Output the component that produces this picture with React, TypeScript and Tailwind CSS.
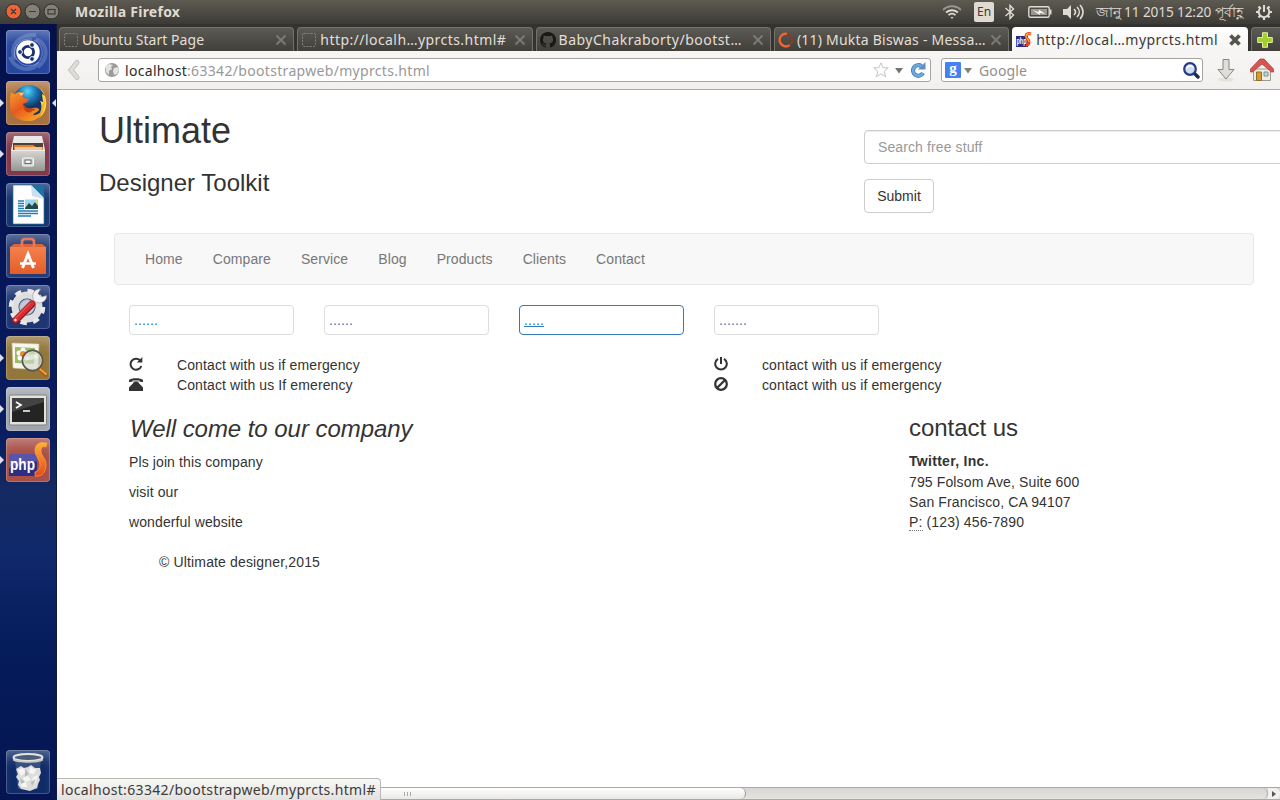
import type { ReactNode } from "react";

const ui = "font-['Noto_Sans','Open_Sans',sans-serif]";

function Tile({ bg, children, running, active }: { bg: string; children: ReactNode; running?: boolean; active?: boolean }) {
  return (
    <div className="relative flex h-11 w-full shrink-0 justify-center">
      {running && (
        <svg className="absolute left-0 top-[18px] h-2 w-1" viewBox="0 0 4 8"><path d="M0 0 4 4 0 8Z" fill="#dde0ec" /></svg>
      )}
      <div className={"h-11 w-11 overflow-hidden rounded-[4px] shadow-[inset_0_0_0_1px_rgba(255,255,255,0.2),inset_0_12px_12px_-6px_rgba(255,255,255,0.3)] " + bg}>
        <svg className="h-11 w-11" viewBox="0 0 44 44">{children}</svg>
      </div>
      {active && (
        <svg className="absolute right-0 top-[18px] h-2 w-1" viewBox="0 0 4 8"><path d="M4 0 0 4 4 8Z" fill="#dde0ec" /></svg>
      )}
    </div>
  );
}

function Launcher() {
  return (
    <aside className="flex w-[57px] shrink-0 flex-col gap-[7px] border-r border-[#111a3c] bg-[linear-gradient(180deg,#03104a_0%,#06175a_35%,#0a1f60_54%,#152a62_60%,#10296a_68%,#082060_76%,#051a59_84%,#051552_100%)] pt-1.5 pb-1.5">
      <Tile bg="bg-[#2747a0]">
        <g fill="none" stroke="#c8d4f4" strokeWidth="4" opacity="0.25">
          <path d="M9 30C3 16 13 4 30 5" /><path d="M30 9C42 14 43 28 32 37" /><path d="M33 33C25 43 9 40 4 27" />
        </g>
        <g fill="none" stroke="#dbe3f8" strokeWidth="1" opacity="0.45">
          <path d="M9 28C6 16 15 8 26 9" /><path d="M28 10c9 4 11 15 4 23" /><path d="M33 32c-8 7-19 4-23-4" />
        </g>
        <circle cx="22" cy="22" r="11.7" fill="#fff" />
        <circle cx="22" cy="22" r="5.6" fill="none" stroke="#18316f" strokeWidth="2.8" />
        <g fill="#18316f" stroke="#fff" strokeWidth="1"><circle cx="14" cy="22" r="2.4" /><circle cx="26" cy="15" r="2.4" /><circle cx="26" cy="29" r="2.4" /></g>
      </Tile>
      <Tile bg="bg-[#a9713f]" running active>
        <defs>
          <radialGradient id="globe" cx="0.45" cy="0.2"><stop stopColor="#62d3f3" /><stop offset="0.5" stopColor="#1b80bf" /><stop offset="1" stopColor="#153566" /></radialGradient>
          <linearGradient id="fox" x2="0.8" y2="1"><stop stopColor="#f69a30" /><stop offset="0.5" stopColor="#e85a1c" /><stop offset="1" stopColor="#f7a62b" /></linearGradient>
        </defs>
        <circle cx="23" cy="20" r="16" fill="url(#globe)" />
        <path d="M34 7c9 9 8 24-1 30 5-6 4-12 1-17l3 1-1-8 3 2Z" fill="#ffe34e" />
        <path d="M38 15c4 15-5 25-17 25 11-2 16-9 14-18l2 1Z" fill="#fbb92d" />
        <path d="M5 11c1 2 3 2 4 2 3-3 6-2 9-1-2 2-2 4 0 5l5 1c0 3-4 4-6 5 1 4 6 6 10 4 4-1 7 1 6 2-1 2-4 2-6 5 4 0 8-2 10-5-2 8-9 11-15 11C10 40 4 33 4 24c0-5 0-9 1-13Z" fill="url(#fox)" />
        <path d="M18 24c3 5 8 3 11 4 1 1-2 1-4 3-3 2-9-2-7-7Z" fill="#c9420e" />
        <path d="M13 12l5 0-3 3Z" fill="#ffd080" />
      </Tile>
      <Tile bg="bg-[#823848]" running>
        <defs><linearGradient id="cab" y2="1" x2="0"><stop stopColor="#d6d6d2" /><stop offset="1" stopColor="#969693" /></linearGradient></defs>
        <path d="M8 4h28l3 14H5Z" fill="#e9e9e7" /><path d="M7 11h30v8H7Z" fill="#4e4137" />
        <path d="M8 13h19l3 2h7v4H8Z" fill="#e68332" /><path d="M9 15h27v4H9Z" fill="#f3c49b" />
        <rect x="5" y="18" width="34" height="21" rx="1.5" fill="url(#cab)" /><path d="M5 18.5h34" stroke="#eee" />
        <rect x="16.5" y="26" width="11" height="8" rx="1" fill="#d3d3d3" stroke="#f4f4f4" /><rect x="19" y="28" width="6" height="3.5" fill="#f5f5f5" stroke="#686868" />
      </Tile>
      <Tile bg="bg-[#15336f]">
        <path d="M7 2h21l10 10v29H7Z" fill="#fff" /><path d="M25 2h13v13Z" fill="#1b71a6" /><path d="M25 2l1 11 12 3Z" fill="#c5e1ef" />
        <path d="M12 18h6M12 20.5h6M12 23h6M12 25.5h6M12 28h20M12 30.5h20M12 33h13" stroke="#1e80b9" strokeWidth="1.4" />
        <rect x="19" y="16.5" width="13" height="9.5" fill="#9bd4f2" /><path d="M19 25l4-5 3 3 3-4 3 4v3H19Z" fill="#254a43" /><circle cx="30" cy="18.500" r="1.3" fill="#f4d440" />
        <path d="M7 2h21l10 10v29H7Z" fill="none" stroke="#2678a2" strokeWidth="0.7" />
      </Tile>
      <Tile bg="bg-[#243d74]">
        <defs><linearGradient id="bag" y2="1" x2="0"><stop stopColor="#f5814d" /><stop offset="1" stopColor="#e35d28" /></linearGradient></defs>
        <path d="M4 13h36v27H4Z" fill="url(#bag)" /><path d="M4 13l4-3h28l4 3Z" fill="#d9643a" />
        <path d="M16 14V8c0-2 1-3 3-3h6c2 0 3 1 3 3v6" fill="none" stroke="#e87857" strokeWidth="2.6" />
        <path d="M16.5 34 22 20l5.500 14" fill="none" stroke="#fff" strokeWidth="3" /><path d="M14 29.500h16" stroke="#fff" strokeWidth="2.5" />
      </Tile>
      <Tile bg="bg-[#1d3673]">
        <circle cx="21" cy="22" r="12" fill="none" stroke="#dedede" strokeWidth="7" />
        <circle cx="21" cy="22" r="16" fill="none" stroke="#e8e8e8" strokeWidth="4.5" strokeDasharray="6.3 6.27" />
        <circle cx="21" cy="22" r="7.5" fill="#c3c9d6" stroke="#9ba2b1" />
        <path d="m22 22 9-9" stroke="#d8d8d8" strokeWidth="4.5" />
        <path d="M27.500 15C25 9 29 3.500 34.500 4L32 8.500l3.500 3.500 5-1.500C41 16 35 19.500 29.500 17Z" fill="#f0f0f0" stroke="#999" strokeWidth="0.6" />
        <path d="M9.500 35.500 26 19" stroke="#8e1318" strokeWidth="7" strokeLinecap="round" /><path d="M9.500 35 26 18.500" stroke="#d92e31" strokeWidth="5.300" strokeLinecap="round" />
        <path d="M9 33.500 24.500 18" stroke="#ef6a68" strokeWidth="1" />
        <circle cx="9.500" cy="35" r="1.2" fill="#fff" />
      </Tile>
      <Tile bg="bg-[#92763a]" running>
        <path d="M6 7l27 1-1 26-25-2Z" fill="#f7f7f0" stroke="#c9c2a1" strokeWidth="0.6" /><path d="M9 11l20 1-1 16-19-1Z" fill="#9bbb66" />
        <g fill="#fff"><circle cx="17" cy="14" r="2.5" /><circle cx="13" cy="17" r="2.5" /><circle cx="21" cy="17" r="2.5" /><circle cx="14" cy="22" r="2.5" /><circle cx="20" cy="22" r="2.5" /></g><circle cx="17" cy="18" r="3" fill="#ed8832" />
        <path d="m34 33 6 6" stroke="#a85f15" strokeWidth="4.5" strokeLinecap="round" /><path d="m34 33 6 5" stroke="#eaa13a" strokeWidth="2" strokeLinecap="round" />
        <circle cx="26.500" cy="24.500" r="10" fill="#d5dacb" fillOpacity="0.65" stroke="#55574c" strokeWidth="1.8" /><circle cx="26.500" cy="24.500" r="8.8" fill="none" stroke="#ddd" strokeWidth="0.8" />
        <path d="M20 23c3-7 11-5 13-1-5 0-8 4-13 1Z" fill="#fff" opacity="0.5" />
      </Tile>
      <Tile bg="bg-[#9fa4ae]" running>
        <rect x="3.500" y="8" width="37" height="30" rx="1.500" fill="#e2e2dd" stroke="#81847f" /><rect x="6" y="11" width="32" height="24" fill="#242424" />
        <path d="M6 11h32v4L6 25Z" fill="#555" opacity="0.65" /><path d="m10 15 5 3-5 3M17 24h7" fill="none" stroke="#fff" strokeWidth="1.7" />
      </Tile>
      <Tile bg="bg-[#a84f47]" running>
        <defs><linearGradient id="phps" y2="1" x2="0"><stop stopColor="#ffb238" /><stop offset="1" stopColor="#e64915" /></linearGradient></defs>
        <rect x="3" y="16" width="28" height="22" fill="#2b2e83" /><path d="M3 16h28v7L3 30Z" fill="#5855a8" />
        <text x="4" y="32" fill="#fff" fontFamily="Liberation Sans, sans-serif" fontSize="17" fontWeight="bold" textLength="25" lengthAdjust="spacingAndGlyphs">php</text>
        <path d="M41 5c-7-2-12 1-12 7 0 7 5 9 5 15 0 4-2 6-5 7v4c7 1 11-4 11-11 0-7-5-9-5-14 0-4 2-5 5-4Z" fill="url(#phps)" stroke="#ffa444" strokeWidth="0.7" />
      </Tile>
      <div className="flex-1" />
      <Tile bg="bg-[#102c68]">
        <path d="M9 10h26l-3 29H12Z" fill="#5c7095" opacity="0.5" />
        <path d="M10 19l5-3 3 2 4-1 3-2 4 3 5 0 1 5-2 4 1 3-2 4-1 4-7 3-9-2-3-4 1-4-3-4 2-3Z" fill="#ddd" />
        <g fill="#f5f5f2"><path d="m12 20 5-2 3 4-5 4ZM24 17l6 3-2 4-5-1ZM17 28l4-3 4 5-6 2ZM27 27l5-2-2 7-4 1ZM14 33l6-1 1 5-5 0Z" /></g>
        <g fill="#b8bab7"><path d="m19 19 4 5-4 3ZM14 28l5 4-4 2ZM25 32l5-3-4 7Z" /></g>
        <ellipse cx="22" cy="7.500" rx="14.500" ry="3.500" fill="#4a5d7b" stroke="#e4e4df" strokeWidth="2" /><path d="M7 8c2 4 28 4 30 0v2.500c-4 3-26 3-30 0Z" fill="#cacac5" />
      </Tile>
    </aside>
  );
}

function TopBar() {
  return (
    <header className={"flex h-6 shrink-0 items-center bg-linear-to-b from-[#5d5a51] to-[#3c3b37] text-[14px] text-[#dfdbd2] " + ui}>
      <svg className="ml-[5px] h-5 w-14" viewBox="0 0 56 20">
        <g stroke="#302f2b"><circle cx="8.500" cy="9.500" r="7.500" fill="#ee6435" /><circle cx="27.500" cy="9.500" r="7.500" fill="#838078" /><circle cx="46.500" cy="9.500" r="7.500" fill="#838078" /></g>
        <g stroke="#3a3934" strokeWidth="1.2" fill="none"><path d="m6 7 5 5m0-5-5 5M24 9.500h7" /><rect x="43" y="7.500" width="7" height="4.500" /></g>
      </svg>
      <span className="ml-[14px] w-[120px] whitespace-nowrap text-[14px] font-bold leading-6 tracking-[0.25px]">Mozilla Firefox</span>
      <div className="flex-1" />
      <div className="flex h-6 items-center">
        <svg className="h-6 w-[22px]" viewBox="0 0 22 24" fill="none" stroke="#dfdbd2" strokeWidth="1.8">
          <path d="M2 10c5-5 13-5 18 0" opacity="0.5" /><path d="M5 12.500c4-3 8-3 12 0M7.500 15.200c2-2 5-2 7 0" /><path d="m9.500 17 1.500 2 1.500-2Z" fill="#dfdbd2" stroke="none" />
        </svg>
        <span className="ml-[11px] flex h-5 w-5 items-center justify-center rounded-[2px] bg-[#dfdbd2] text-[12px] text-[#3c3b37]">En</span>
        <svg className="ml-[10px] h-5 w-3" viewBox="0 0 12 20" fill="none" stroke="#dfdbd2" strokeWidth="1.4"><path d="m1.500 6 8 7L6 16.500v-13L9.500 7l-8 7" /></svg>
        <svg className="ml-[12px] h-5 w-6" viewBox="0 0 24 20"><rect x="0.800" y="4.700" width="20.400" height="10.600" rx="1.500" fill="none" stroke="#dfdbd2" strokeWidth="1.400" /><path d="M3 7h16v6H3Z" fill="#99968f" /><path d="M22 7.500h1.500v5H22Z" fill="#dfdbd2" /><path d="M4.500 8 11 10.200 10.500 7.500 17.500 12 11.500 10.800 12 13Z" fill="#fff" /></svg>
        <svg className="ml-[11px] h-5 w-[22px]" viewBox="0 0 22 20" fill="none" stroke="#dfdbd2" strokeWidth="1.6"><path d="M0 7h4l4-4v14l-4-4H0Z" fill="#dfdbd2" stroke="none" /><path d="M11 7c2 2 2 4 0 6M14 5c3 3 3 7 0 10M17 3c4 4 4 10 0 14" /></svg>
        <span className="ml-[11px] w-[149px] whitespace-nowrap text-[13.700px] leading-6 tracking-[-0.150px]">জানু 11 2015 12:20 পূর্বাহ্ণ</span>
        <svg className="mr-[7px] ml-[10px] h-5 w-[18px]" viewBox="0 0 18 20" fill="none" stroke="#dfdbd2">
          <path d="M6 5.500a5.300 5.300 0 1 0 6 0" strokeWidth="2" /><path d="M9 3v7" strokeWidth="2" /><path d="M3.500 4.500l2 2M14.500 4.500l-2 2M1 10h2.500M14.500 10H17M3.500 15.500l2-2M14.500 15.500l-2-2M9 15v3" strokeWidth="2.2" />
        </svg>
      </div>
    </header>
  );
}

function CloseX({ dark }: { dark?: boolean }) {
  return <svg className="h-3 w-3 shrink-0" viewBox="0 0 12 12"><path d="m1.500 1.500 9 9m0-9-9 9" stroke={dark ? "#555550" : "#7c7a73"} strokeWidth={dark ? 3.8 : 2} /></svg>;
}

function BlankIcon() {
  return <svg className="h-4 w-4 shrink-0" viewBox="0 0 16 16"><rect x="1.500" y="1.500" width="13" height="13" rx="1.500" fill="none" stroke="#85837c" strokeDasharray="2 1.3" /></svg>;
}

function Tab({ icon, title, spacing }: { icon: ReactNode; title: string; spacing: string }) {
  return (
    <div className="flex h-6 w-[235.300px] shrink-0 items-center rounded-t-[4px] border border-b-0 border-[#74726b] bg-linear-to-b from-[#5c5a54] to-[#403f3a] pr-[6px] pl-[3px] text-[#e3dfd7]">
      {icon}
      <span className={"min-w-0 flex-1 whitespace-nowrap pl-[3px] leading-6 " + spacing}>{title}</span>
      <CloseX />
    </div>
  );
}

function Tabs() {
  return (
    <div className={"flex h-[27px] items-end gap-[3px] overflow-hidden bg-[#34332f] pl-0.5 text-[14px] " + ui}>
      <Tab icon={<BlankIcon />} title="Ubuntu Start Page" spacing="tracking-[0.040px]" />
      <Tab icon={<BlankIcon />} title="http://localh…yprcts.html#" spacing="tracking-[0.440px]" />
      <Tab icon={
        <svg className="h-4 w-4 shrink-0" viewBox="0 0 16 16"><path fill="#191917" d="M8 0C3.600 0 0 3.600 0 8c0 3.500 2.300 6.500 5.500 7.600.4.1.5-.2.5-.4v-1.400c-2.200.5-2.700-1-2.700-1-.4-.9-.9-1.100-.9-1.100-.7-.5.1-.5.1-.5.8.1 1.200.8 1.200.8.7 1.200 1.900.9 2.300.7.1-.5.3-.9.5-1.100-1.800-.2-3.600-.9-3.600-4 0-.9.3-1.600.8-2.100-.1-.2-.4-1 .1-2.100 0 0 .7-.2 2.200.8a7.700 7.700 0 0 1 4 0c1.500-1 2.200-.8 2.200-.8.4 1.100.2 1.900.1 2.100.5.6.8 1.300.8 2.100 0 3.100-1.900 3.700-3.700 3.900.3.3.6.8.6 1.500v2.200c0 .2.1.5.6.4A8 8 0 0 0 8 0Z" /></svg>
      } title="BabyChakraborty/bootst…" spacing="tracking-[0.480px]" />
      <Tab icon={
        <svg className="h-4 w-4 shrink-0" viewBox="0 0 16 16" fill="none"><circle cx="8" cy="8" r="6.300" stroke="#873c28" strokeWidth="2" /><path d="M11.500 13.200A6.300 6.300 0 1 1 9 1.800" stroke="#f26534" strokeWidth="2.300" /></svg>
      } title="(11) Mukta Biswas - Messa…" spacing="tracking-[0.220px]" />
      <div className="flex h-6 w-[235.800px] shrink-0 items-center rounded-t-[4px] bg-linear-to-b from-white to-[#f5f4f2] pt-px pr-[7px] pl-1 text-[#3c3b37]">
        <svg className="h-4 w-4 shrink-0" viewBox="0 0 16 16">
          <rect y="4" width="12" height="11" fill="#302b80" /><text x="0.500" y="12" fill="#fff" fontFamily="Liberation Sans, sans-serif" fontSize="9" fontWeight="bold" textLength="10" lengthAdjust="spacingAndGlyphs">php</text>
          <path d="M15 2c-3-1-5 0-5 2 0 3 3 3 3 6 0 2-1 3-3 3" fill="none" stroke="#e74616" strokeWidth="3" /><path d="M15 2c-3-1-5 0-5 2 0 3 3 3 3 6" fill="none" stroke="#ffb02b" strokeWidth="1.1" />
        </svg>
        <span className="min-w-0 flex-1 whitespace-nowrap pl-1 leading-6 tracking-[0.480px]">http://local…myprcts.html</span>
        <CloseX dark />
      </div>
      <div className="flex h-6 w-8 shrink-0 items-center rounded-tl-[4px] border-t border-l border-[#74726b] bg-linear-to-b from-[#5c5a54] to-[#403f3a] pl-[5px]">
        <svg className="h-4 w-4" viewBox="0 0 16 16"><path d="M5.500.7h5v4.800h4.800v5h-4.800v4.800h-5v-4.800H.7v-5h4.800Z" fill="#a4cf31" stroke="#e2ee9c" /></svg>
      </div>
    </div>
  );
}

function Toolbar() {
  return (
    <div className={"flex h-[39px] items-center overflow-hidden border-b border-[#aaa9a5] bg-linear-to-b from-[#f7f6f4] to-[#f1f0ee] text-[14px] " + ui}>
      <svg className="ml-[10px] h-6 w-[14px] shrink-0" viewBox="0 0 14 24"><path d="M10 4.500 4 12l6 7.500" fill="none" stroke="#c0c0bc" strokeWidth="5" strokeLinecap="round" /><path d="M10 4.500 4 12l6 7.500" fill="none" stroke="#deddda" strokeWidth="3.200" strokeLinecap="round" /></svg>
      <div className="ml-[17px] flex h-6 w-[833px] shrink-0 items-center rounded-[3px] border border-[#a4a39f] bg-white pr-[4px] pl-[5px]">
        <svg className="h-4 w-4 shrink-0" viewBox="0 0 16 16"><circle cx="8" cy="8" r="7" fill="#9a9a98" /><path d="M2 4l3-2 4 1-2 2 1 2-3 2v4L2 10ZM10 6l4-1 1 3-2 4-3 1-1-4Z" fill="#e3e3e2" /></svg>
        <span className="flex-1 whitespace-nowrap pl-[5px] pt-px leading-5 tracking-[0.320px] text-[#999896]"><span className="text-[#2f2e2b]">localhost</span>:63342/bootstrapweb/myprcts.html</span>
        <svg className="h-4 w-4" viewBox="0 0 16 16"><path d="m8 .8 2.200 5h5l-4 3.600 1.500 5.400L8 11.800l-4.700 3 1.500-5.400-4-3.600h5Z" fill="#fff" stroke="#c4c4c2" /></svg>
        <svg className="ml-[6px] h-2 w-2" viewBox="0 0 8 8"><path d="M0 2h8L4 7.500Z" fill="#73726e" /></svg>
        <svg className="ml-[7px] h-4 w-4" viewBox="0 0 16 16"><path d="M11.500 4.200A5.300 5.300 0 1 0 13 11" fill="none" stroke="#4b84bc" strokeWidth="4.200" /><path d="M11.500 4.200A5.300 5.300 0 1 0 13 11" fill="none" stroke="#73a9d9" strokeWidth="2.400" /><path d="M15.500 0v7.500H8Z" fill="#5a91c9" /></svg>
      </div>
      <div className="ml-[10px] flex h-6 w-[262px] shrink-0 items-center rounded-[3px] border border-[#a4a39f] bg-white px-[3px]">
        <span className="flex h-4 w-4 shrink-0 justify-center rounded-[1px] bg-[#4581f5] font-['Liberation_Serif',serif] text-[15px] leading-[12px] font-bold text-white">g</span>
        <svg className="ml-[3px] h-2 w-2" viewBox="0 0 8 8"><path d="M0 2h8L4 7.500Z" fill="#83827e" /></svg>
        <span className="ml-[7px] flex-1 pt-px leading-5 tracking-[0.150px] text-[#91908c]">Google</span>
        <svg className="-mr-px h-[18px] w-[18px]" viewBox="0 0 18 18"><path d="m12 12 4 4" stroke="#202748" strokeWidth="3.400" strokeLinecap="round" /><circle cx="8" cy="8" r="5.800" fill="#d1ddec" stroke="#263a8b" strokeWidth="2.200" /><path d="M5 7.500c0-3 5-4 6-1" stroke="#fff" fill="none" strokeWidth="1.500" /></svg>
      </div>
      <svg className="ml-[13px] h-6 w-5 shrink-0" viewBox="0 0 20 24"><ellipse cx="10" cy="21.500" rx="8" ry="2" fill="#e4e3e0" /><path d="M7 1.500h6v10h5L10 21l-8-9.500h5Z" fill="#dededc" stroke="#858681" /></svg>
      <svg className="ml-[14px] h-6 w-6 shrink-0" viewBox="0 0 24 24"><path d="M3.500 11h17v11.500h-17Z" fill="#efedde" stroke="#9a9a93" /><path d="M6.500 14h5v8.500h-5Z" fill="#d89b2e" stroke="#936e2b" /><path d="M14 14h4v4h-4Z" fill="#c3d4e4" stroke="#7f8c92" /><path d="M10 1h4l9.500 10v3h-2L12 6 2.500 14h-2v-3Z" fill="#d95352" stroke="#ad3434" strokeWidth="0.700" /></svg>
    </div>
  );
}

const links = ["Home", "Compare", "Service", "Blog", "Products", "Clients", "Contact"];
const boxes = ["......", "......", ".....", "......."];

function Page() {
  return (
    <main className="min-h-0 flex-1 overflow-hidden bg-white pl-[42px] font-['Liberation_Sans',sans-serif] text-[14px] leading-5 tracking-[0.110px] text-[#333]">
      <div className="flex h-[143px]">
        <div className="w-[765px] shrink-0 pt-[21px] tracking-normal">
          <h1 className="text-[36px] leading-[40px]">Ultimate</h1>
          <h3 className="mt-[19px] text-[24px] leading-[26px]">Designer Toolkit</h3>
        </div>
        <div className="shrink-0 pt-10">
          <div className="h-[34px] w-[560px] rounded-[4px] border border-[#ccc] px-[13px] py-1.5 text-[#999] shadow-[inset_0_1px_1px_rgba(0,0,0,0.075)]">Search free stuff</div>
          <button className="mt-[15px] block h-[34px] w-[70px] rounded-[4px] border border-[#ccc] bg-white tracking-normal">Submit</button>
        </div>
      </div>
      <nav className="ml-[15px] flex h-[52px] w-[1140px] items-center rounded-[4px] border border-[#e7e7e7] bg-[#f8f8f8] pl-[15px] tracking-[0.090px] text-[#777]">
        {links.map((l) => <a key={l} className="px-[15px]">{l}</a>)}
      </nav>
      <div className="mt-5 ml-[30px] flex gap-[30px]">
        {boxes.map((b, i) => (
          <a key={i} className={"flex h-[30px] w-[165px] items-center rounded-[4px] border px-1 text-[#337ab7] " + (i === 2 ? "border-[#337ab7] underline" : "border-[#ddd]")}>{b}</a>
        ))}
      </div>
      <div className="mt-5 ml-[30px] flex">
        <div className="grid w-[585px] grid-cols-[48px_1fr] items-center">
          <svg className="mb-0.5 h-[14px] w-[14px]" viewBox="0 0 14 14"><path d="M11 3.300A5.500 5.500 0 1 0 12.300 9" fill="none" stroke="#333" strokeWidth="2" /><path d="M13.300 0v5.500H7.800Z" fill="#333" /></svg>
          <span>Contact with us if emergency</span>
          <svg className="mb-0.5 h-[14px] w-[14px]" viewBox="0 0 14 14"><path d="M0 5V3C2 .8 12 .8 14 3v2l-3.500-.3V3.500h-7V4.700ZM4.500 4.500h5v1.200l4.500 4.800V14H0v-3.500l4.500-4.800Z" fill="#333" /></svg>
          <span>Contact with us If emerency</span>
        </div>
        <div className="grid grid-cols-[48px_1fr] items-center">
          <svg className="mb-0.5 h-[14px] w-[14px]" viewBox="0 0 14 14" fill="none" stroke="#333" strokeWidth="2"><path d="M4 1.800a5.800 5.800 0 1 0 6 0" /><path d="M7 0v7" /></svg>
          <span>contact with us if emergency</span>
          <svg className="mb-0.5 h-[14px] w-[14px]" viewBox="0 0 14 14" fill="none" stroke="#333" strokeWidth="2.300"><circle cx="7" cy="7" r="5.800" /><path d="m3.200 10.800 7.600-7.600" /></svg>
          <span>contact with us if emergency</span>
        </div>
      </div>
      <div className="ml-[30px] flex">
        <div className="w-[780px]">
          <h3 className="mt-[21px] pl-px text-[24px] italic leading-[26px] tracking-[-0.050px]">Well come to our company</h3>
          <p className="mt-[10px]">Pls join this company</p>
          <p className="mt-2.5">visit our</p>
          <p className="mt-2.5">wonderful website</p>
          <p className="mt-5 ml-[30px] tracking-[0.150px]">© Ultimate designer,2015</p>
        </div>
        <div>
          <h3 className="mt-5 text-[24px] leading-[26px] tracking-[-0.050px]">contact us</h3>
          <address className="mt-2.5 tracking-[0.130px] not-italic">
            <strong className="block h-[21px] tracking-[0.300px]">Twitter, Inc.</strong>795 Folsom Ave, Suite 600<br />San Francisco, CA 94107<br />
            <abbr className="border-b border-dotted border-[#777] no-underline">P:</abbr> (123) 456-7890
          </address>
        </div>
      </div>
    </main>
  );
}

function ScrollBar() {
  return (
    <div className="flex h-[13px] shrink-0 border-y border-[#aaa9a6] bg-linear-to-b from-[#d7d6d2] to-[#e5e4e1]">
      <div className="flex w-[689px] items-center justify-center rounded-r-full border-r border-[#999894] bg-linear-to-b from-white to-[#e9e8e6] pl-[14px]">
        <svg className="h-1 w-2" viewBox="0 0 8 4"><path d="M.5 0v4M3.500 0v4M6.500 0v4" stroke="#aaa" /></svg>
      </div>
      <div className="flex-1 rounded-r-full border-r border-[#aaa9a6]" />
      <div className="flex w-3 items-center justify-center rounded-r-full bg-[#f1f0ee]"><svg className="h-1.5 w-1" viewBox="0 0 4 6"><path d="m0 0 4 3-4 3Z" fill="#555" /></svg></div>
    </div>
  );
}

export default function App() {
  return (
    <div className="flex h-[800px] w-[1280px] flex-col overflow-hidden">
      <TopBar />
      <div className="flex min-h-0 flex-1">
        <Launcher />
        <section className="relative flex min-w-0 flex-1 flex-col">
          <Tabs />
          <Toolbar />
          <Page />
          <ScrollBar />
          <div className={"absolute bottom-0 left-0 h-[22px] w-[324px] whitespace-nowrap rounded-tr-[4px] border-t border-r border-[#b9b8b5] bg-linear-to-b from-[#f8f8f7] to-[#e3e2df] pl-1 text-[14px] leading-[22px] tracking-[0.330px] text-[#3c3b37] " + ui}>localhost:63342/bootstrapweb/myprcts.html#</div>
        </section>
      </div>
    </div>
  );
}
